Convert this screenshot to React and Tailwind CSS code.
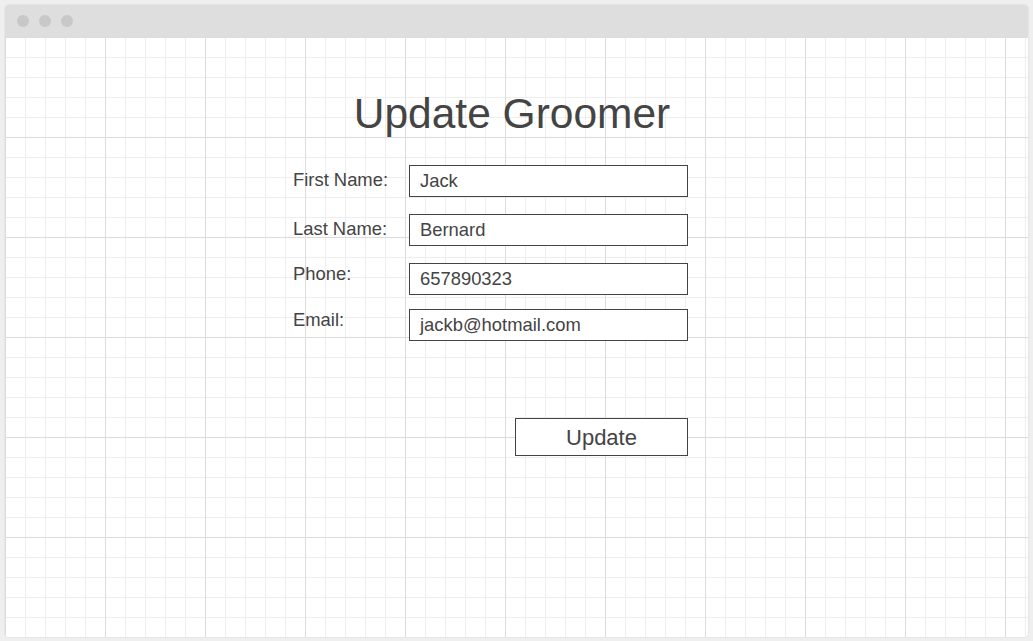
export default function App() {
  const font = "font-['Liberation_Sans',Arial,sans-serif]";
  return (
    <div className={`w-[1033px] h-[641px] bg-[#efefef] p-[5px] pr-[5px] pb-[4px] ${font}`}>
      <div className="w-[1023px] h-[632px] flex flex-col rounded-[4px] overflow-hidden shadow-[0_0_2px_rgba(0,0,0,0.12)]">
        <div className="h-[32px] bg-[#dedede] flex items-center gap-[10px] pl-[12px] shrink-0">
          <span className="w-[12px] h-[12px] rounded-full bg-[#c8c8c8]" />
          <span className="w-[12px] h-[12px] rounded-full bg-[#c8c8c8]" />
          <span className="w-[12px] h-[12px] rounded-full bg-[#c8c8c8]" />
        </div>
        <div className="flex-1 bg-white bg-[linear-gradient(to_right,#dcdcdc_1px,transparent_1px),linear-gradient(to_bottom,#dcdcdc_1px,transparent_1px),linear-gradient(to_right,#eeeeee_1px,transparent_1px),linear-gradient(to_bottom,#eeeeee_1px,transparent_1px)] bg-[size:100px_100px,100px_100px,20px_20px,20px_20px]">
          <div className="ml-[288px] w-[438px] pt-[53px] text-[#444444]">
            <h1 className="text-center text-[42.5px] leading-[48px]">Update Groomer</h1>
            <div className="w-[395px] mt-[27px] flex flex-col">
              <div className="flex items-start h-[32px]">
                <div className="w-[116px] text-[18.4px] leading-[22px] pt-[4px]">First Name:</div>
                <div className="w-[279px] h-[32px] border border-[#444444] bg-white flex items-center pl-[10px] text-[18.4px]">Jack</div>
              </div>
              <div className="flex items-start h-[32px] mt-[17px]">
                <div className="w-[116px] text-[18.4px] leading-[22px] pt-[4px]">Last Name:</div>
                <div className="w-[279px] h-[32px] border border-[#444444] bg-white flex items-center pl-[10px] text-[18.4px]">Bernard</div>
              </div>
              <div className="flex items-start h-[32px] mt-[17px]">
                <div className="w-[116px] text-[18.4px] leading-[22px]">Phone:</div>
                <div className="w-[279px] h-[32px] border border-[#444444] bg-white flex items-center pl-[10px] text-[18.4px]">657890323</div>
              </div>
              <div className="flex items-start h-[32px] mt-[14px]">
                <div className="w-[116px] text-[18.4px] leading-[22px]">Email:</div>
                <div className="w-[279px] h-[32px] border border-[#444444] bg-white flex items-center pl-[10px] text-[18.4px]">jackb@hotmail.com</div>
              </div>
              <div className="flex justify-end mt-[77px]">
                <button className="w-[173px] h-[38px] border border-[#444444] bg-white text-[22px] text-[#444444] flex items-center justify-center">Update</button>
              </div>
            </div>
          </div>
        </div>
      </div>
    </div>
  );
}
